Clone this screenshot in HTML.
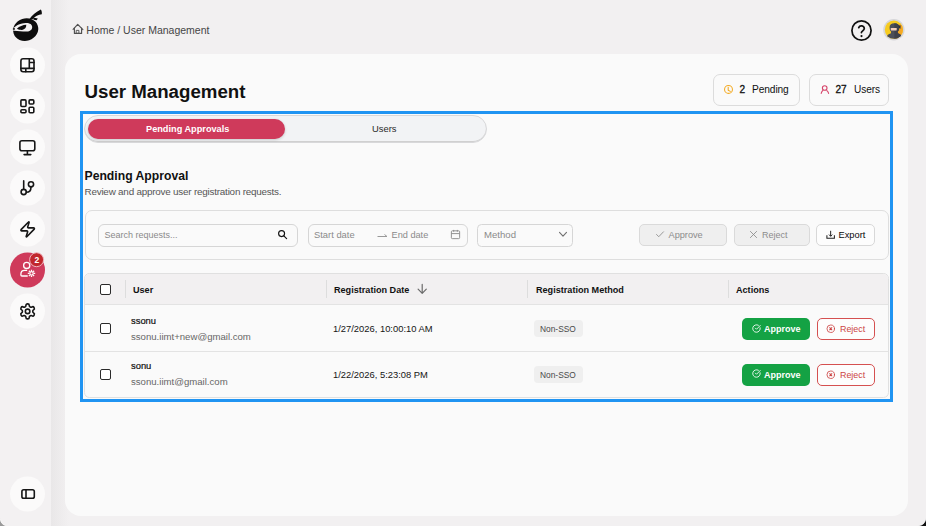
<!DOCTYPE html>
<html><head><meta charset="utf-8">
<style>
*{box-sizing:border-box;margin:0;padding:0}
html,body{width:926px;height:526px;overflow:hidden;background:#f2f0f1;font-family:"Liberation Sans",sans-serif;color:#151515}
.abs{position:absolute}
#side{position:absolute;left:0;top:0;width:51px;height:526px;background:#f3f1f2}
#shadow{position:absolute;left:51px;top:0;width:18px;height:526px;background:linear-gradient(to right,#e9e7e8,#f2f0f1)}
.sb{position:absolute;left:10px;width:35px;height:35px;border-radius:50%;background:#fbfafa}
.sb svg{position:absolute;left:9px;top:9px;width:17px;height:17px;fill:none;stroke:#1a1a1a;stroke-width:2;stroke-linecap:round;stroke-linejoin:round}
#card{position:absolute;left:65px;top:54px;width:843px;height:462px;background:#fafafa;border-radius:16px}
.t{position:absolute;white-space:nowrap;line-height:1}
.badge{position:absolute;top:74px;height:32px;border:1px solid #dcdcdc;border-radius:7px;background:#fafafa}
#outline{position:absolute;left:80px;top:111px;width:813px;height:291px;border:3px solid #2094f2}
.inp{border:1px solid #d6d6d6;border-radius:6px;background:#fafafa}
.dis{border:1px solid #dadada;border-radius:5px;background:#efefef}
.vsep{top:280px;width:1px;height:18px;background:#dddddd}
.cb{width:11px;height:11px;border:1.6px solid #2a2a2a;border-radius:2px;background:#fff}
.th{top:286px;font-size:9.1px;font-weight:700;color:#111}
.chip{left:534px;width:49px;height:17px;border-radius:4px;background:#efefef}
.ap{left:742px;width:68px;height:22px;border-radius:5px;background:#14a244}
.rj{left:817px;width:58px;height:22px;border-radius:5px;border:1px solid #d55050;background:#fdfdfd}
</style></head><body>
<div id="side"></div>
<div id="shadow"></div>

<!-- sidebar -->
<svg class="abs" style="left:0;top:0" width="51" height="526" viewBox="0 0 51 526">
 <g fill="#fbfafa">
  <circle cx="27.5" cy="65" r="17.5"/><circle cx="27.5" cy="106" r="17.5"/><circle cx="27.5" cy="147" r="17.5"/>
  <circle cx="27.5" cy="188" r="17.5"/><circle cx="27.5" cy="229" r="17.5"/><circle cx="27.5" cy="311" r="17.5"/>
  <circle cx="27.5" cy="494" r="17.5"/>
 </g>
 <circle cx="27.5" cy="270" r="17.5" fill="#cf3a5b"/>
 <!-- logo -->
 <g fill="#0d0d0d">
  <ellipse cx="25.7" cy="29.6" rx="12.7" ry="11.2" transform="rotate(-18 25.7 29.6)"/>
  <path d="M29.5 19 C32 15.5 36 12 40.8 9.6 C41.8 11 42 12.8 41.8 14.2 C38.5 14.5 35 16 32.5 19.3 Z"/>
  <path d="M33 17.6 L37.8 18.4 L36.6 20.2 L33.6 19.8 Z"/>
 </g>
 <path d="M13.4 28.4 C16 25.4 21 23.3 25.5 23.1 C29.8 22.9 32.2 24.6 32.2 27.1 C32.2 29.9 29.8 31.6 27 31.6 C22 31.7 17.5 30.5 13.2 30.7 Z" fill="#f3f1f2"/>
 <path d="M16.9 28.7 C19.2 26.4 23 24.9 26.3 24.8 C26.4 27.8 24.8 29.6 22 29.9 C20.2 30 18.4 29.5 16.9 28.7 Z" fill="#0d0d0d"/>
 <rect x="12.9" y="28.2" width="2" height="1.5" fill="#0d0d0d"/>
 <g fill="none" stroke="#161616" stroke-width="1.6" stroke-linecap="round" stroke-linejoin="round">
  <!-- layout -->
  <rect x="20.9" y="58.7" width="13.1" height="13.1" rx="2.2"/>
  <path d="M20.9 68.4H34M29.3 58.7V68.4M29.3 62.5H34M25.8 68.4V71.8"/>
  <!-- grid -->
  <rect x="20.9" y="99.9" width="5.1" height="6.6" rx="1"/>
  <rect x="29.1" y="99.9" width="4.7" height="4.1" rx="1"/>
  <rect x="20.9" y="109.8" width="5.1" height="3" rx="1"/>
  <rect x="29.1" y="107.3" width="4.7" height="5.5" rx="1"/>
  <!-- monitor -->
  <rect x="19.9" y="140.7" width="14.9" height="10.1" rx="2"/>
  <path d="M27.4 150.8V154.6M24.1 154.6H30.8"/>
  <!-- git -->
  <path d="M23.7 180.9V189.3"/>
  <circle cx="23.7" cy="192" r="2.6"/>
  <circle cx="31" cy="184.3" r="2.6"/>
  <path d="M31 186.9 C31 190.5 29 192.3 26.3 192.3"/>
  <!-- panel -->
  <rect x="21.9" y="489.8" width="12.4" height="8.4" rx="1.8"/>
  <path d="M26 489.8V498.2"/>
 </g>
 <g fill="none" stroke="#161616" stroke-width="2.13" stroke-linecap="round" stroke-linejoin="round">
  <path transform="translate(18.65 220.4) scale(0.75)" d="M4 14a1 1 0 0 1-.78-1.63l9.9-10.2a.5.5 0 0 1 .86.46l-1.92 6.02A1 1 0 0 0 13 10h7a1 1 0 0 1 .78 1.63l-9.9 10.2a.5.5 0 0 1-.86-.46l1.92-6.02A1 1 0 0 0 11 14z"/>
  <g transform="translate(18.6 302.4) scale(0.75)">
   <path d="M12.22 2h-.44a2 2 0 0 0-2 2v.18a2 2 0 0 1-1 1.73l-.43.25a2 2 0 0 1-2 0l-.15-.08a2 2 0 0 0-2.73.73l-.22.38a2 2 0 0 0 .73 2.730l.15.1a2 2 0 0 1 1 1.72v.51a2 2 0 0 1-1 1.74l-.15.09a2 2 0 0 0-.73 2.73l.22.38a2 2 0 0 0 2.73.73l.15-.08a2 2 0 0 1 2 0l.43.25a2 2 0 0 1 1 1.73V20a2 2 0 0 0 2 2h.44a2 2 0 0 0 2-2v-.18a2 2 0 0 1 1-1.730l.43-.25a2 2 0 0 1 2 0l.15.08a2 2 0 0 0 2.73-.73l.22-.39a2 2 0 0 0-.73-2.73l-.15-.08a2 2 0 0 1-1-1.74v-.5a2 2 0 0 1 1-1.74l.15-.09a2 2 0 0 0 .73-2.73l-.22-.38a2 2 0 0 0-2.73-.73l-.15.08a2 2 0 0 1-2 0l-.43-.25a2 2 0 0 1-1-1.73V4a2 2 0 0 0-2-2z"/>
   <circle cx="12" cy="12" r="3"/>
  </g>
 </g>
 <!-- user-cog -->
 <g fill="none" stroke="#fff" stroke-width="1.3" stroke-linecap="round" stroke-linejoin="round">
  <circle cx="26.7" cy="265.4" r="3.1"/>
  <path d="M26.6 270.4 H24.6 C22.3 270.4 20.9 272 20.9 274.2 V275 C20.9 275.6 21.3 276 21.9 276 H27.3"/>
  <circle cx="31.5" cy="273.4" r="1.7"/>
 </g>
 <path d="M33.90 273.40L35.20 273.40M33.20 275.10L34.12 276.02M31.50 275.80L31.50 277.10M29.80 275.10L28.88 276.02M29.10 273.40L27.80 273.40M29.80 271.70L28.88 270.78M31.50 271.00L31.50 269.70M33.20 271.70L34.12 270.78" stroke="#fff" stroke-width="1.25" stroke-linecap="butt"/>
 <circle cx="36.6" cy="259.7" r="7" fill="#c1272d" stroke="#f0b8c0" stroke-width="1"/>
 <text x="36.8" y="263.1" text-anchor="middle" font-family="Liberation Sans" font-weight="700" font-size="8.6" fill="#fff">2</text>
</svg>
<!-- breadcrumb -->
<svg class="abs" style="left:70px;top:20px" width="16" height="16" viewBox="70 20 16 16" fill="none" stroke="#505050" stroke-width="1.15" stroke-linejoin="round" stroke-linecap="round"><path d="M73.1 29.3 L77.7 24.3 L82.9 29.6"/><path d="M74.4 28 V33.4 H81.6 V28"/><rect x="76.6" y="30.4" width="2.3" height="3" stroke-width=".9"/></svg>
<div class="t" style="left:86.3px;top:25.2px;font-size:10.5px;color:#454545">Home / User Management</div>

<!-- help + avatar -->
<svg class="abs" style="left:850px;top:19px" width="23" height="23" viewBox="0 0 24 24" fill="none" stroke="#111" stroke-width="1.8" stroke-linecap="round"><circle cx="12" cy="12" r="10"/><path d="M9.1 9a3 3 0 0 1 5.8 1c0 2-3 2.6-3 4.2"/><circle cx="12" cy="17.8" r="1.15" fill="#111" stroke="none"/></svg>
<svg class="abs" style="left:880px;top:16px" width="28" height="28" viewBox="880 16 28 28">
  <defs><clipPath id="av"><circle cx="893.9" cy="29.7" r="9.1"/></clipPath></defs>
  <circle cx="893.9" cy="29.7" r="10.7" fill="#d6d6d9"/>
  <g clip-path="url(#av)">
   <rect x="880" y="16" width="28" height="28" fill="#f7cb1e"/>
   <rect x="894" y="24.5" width="14" height="20" fill="#f6a821"/>
   <path d="M885.8 41 C886 36 887.8 34 891 33.2 L891 31.5 C889.8 30.5 889.6 29 889.6 27 C889.6 24.6 891.4 23.2 894.4 23.2 C897.4 23.2 899.3 24.6 899.3 27 C899.3 29 899 30.5 897.8 31.5 L897.8 33.2 C900.8 34 902.6 36 902.8 41 Z" fill="#4b4f58"/>
   <path d="M894.4 23.2 C897.4 23.2 899.3 24.6 899.3 27 C899.3 29 899 30.5 897.8 31.5 L897.8 33.2 C900.8 34 902.6 36 902.8 41 L894.4 41 Z" fill="#3e4149"/>
   <rect x="890.8" y="28" width="5.9" height="2.5" rx=".4" fill="#f4cdb8"/>
   <path d="M898.6 25.2 L901.2 25.8 L900.2 27 L901.3 28.4 L898.8 28 Z" fill="#2f3238"/>
  </g>
 </svg>

<div id="card"></div>

<div class="t" style="left:84.5px;top:83px;font-size:18.7px;font-weight:700;color:#111">User Management</div>

<div class="badge" style="left:713px;width:87px"></div>
<svg class="abs" style="left:721px;top:82px" width="15" height="15" viewBox="721 82 15 15" fill="none" stroke="#f3aa22" stroke-width="1.05" stroke-linecap="round" stroke-linejoin="round"><circle cx="728.5" cy="89.4" r="3.95"/><path d="M728.2 87.2V90.2L730.3 91.4"/></svg>
<div class="t" style="left:739.5px;top:85px;font-size:10.1px;font-weight:400;-webkit-text-stroke:.3px #111;color:#111">2</div>
<div class="t" style="left:752px;top:84.5px;font-size:10.2px;letter-spacing:-.1px;color:#111">Pending</div>

<div class="badge" style="left:809px;width:80px"></div>
<svg class="abs" style="left:817px;top:82px" width="15" height="15" viewBox="817 82 15 15" fill="none" stroke="#d6456a" stroke-width="1.1" stroke-linecap="round"><circle cx="824.7" cy="88" r="2.3"/><path d="M822.6 90.6C821.9 91.4 821.4 92.3 821.2 93.4M826.9 90.6C827.7 91.3 828.3 92.3 828.6 93.4"/></svg>
<div class="t" style="left:835.5px;top:85px;font-size:10.1px;font-weight:400;-webkit-text-stroke:.3px #111;color:#111">27</div>
<div class="t" style="left:854px;top:84.5px;font-size:10.1px;letter-spacing:-.1px;color:#111">Users</div>


<!-- tabs -->
<div class="abs" style="left:84px;top:115px;width:403px;height:28px;border-radius:14px;background:#f2f3f5;border:1px solid #d8d8da;box-shadow:inset 0 -1px 0 #d0d0d0"></div>
<div class="abs" style="left:88px;top:119px;width:197px;height:20px;border-radius:10px;background:#cf3a5b;box-shadow:0 1px 3px rgba(0,0,0,.18)"></div>
<div class="t" style="left:146px;top:125px;font-size:9.2px;font-weight:700;color:#fff">Pending Approvals</div>
<div class="t" style="left:372px;top:123.5px;font-size:9.4px;font-weight:400;color:#2a2a2a">Users</div>

<div class="t" style="left:84.5px;top:170px;font-size:12.2px;font-weight:700;color:#111">Pending Approval</div>
<div class="t" style="left:84.5px;top:186.5px;font-size:9.9px;letter-spacing:-.22px;color:#555">Review and approve user registration requests.</div>

<!-- filter card -->
<div class="abs" style="left:85px;top:210px;width:804px;height:50px;border:1px solid #dedede;border-radius:7px;background:#fafafa"></div>
<div class="abs inp" style="left:98px;top:224px;width:200px;height:23px"></div>
<div class="t" style="left:104.5px;top:231px;font-size:9px;color:#8a8a8a">Search requests...</div>
<svg class="abs" style="left:277px;top:229px" width="11" height="11" viewBox="0 0 24 24" fill="none" stroke="#111" stroke-width="2.5" stroke-linecap="round"><circle cx="10" cy="10" r="6.5"/><path d="M15 15l6 6"/></svg>

<div class="abs inp" style="left:308px;top:224px;width:160px;height:23px"></div>
<div class="t" style="left:314px;top:230px;font-size:9.4px;color:#8a8a8a">Start date</div>
<svg class="abs" style="left:377px;top:231px" width="11" height="8" viewBox="0 0 11 8" fill="none" stroke="#999" stroke-width="1"><path d="M0.5 5.5h9.5M7.5 3.5l2.5 2"/></svg>
<div class="t" style="left:391.5px;top:231px;font-size:9.2px;color:#8a8a8a">End date</div>
<svg class="abs" style="left:450px;top:229px" width="11" height="11" viewBox="0 0 24 24" fill="none" stroke="#8a8a8a" stroke-width="2"><rect x="3" y="4" width="18" height="17" rx="2"/><path d="M3 10h18M8 2v4M16 2v4"/></svg>

<div class="abs inp" style="left:477px;top:224px;width:96px;height:23px;border-radius:4.5px"></div>
<div class="t" style="left:484px;top:230px;font-size:9.6px;color:#8a8a8a">Method</div>
<svg class="abs" style="left:556px;top:228px" width="14" height="12" viewBox="556 228 14 12" fill="none" stroke="#707070" stroke-width="1.1" stroke-linecap="round" stroke-linejoin="round"><path d="M559.5 232.3L563 236.2L566.5 232.3"/></svg>

<div class="abs dis" style="left:639px;top:224px;width:88px;height:22px"></div>
<svg class="abs" style="left:655px;top:229px" width="10" height="10" viewBox="0 0 24 24" fill="none" stroke="#888" stroke-width="2"><path d="M3 12.5l6 6L21 6"/></svg>
<div class="t" style="left:668.5px;top:231px;font-size:9.2px;color:#8c8c8c">Approve</div>
<div class="abs dis" style="left:734px;top:224px;width:76px;height:22px"></div>
<svg class="abs" style="left:749px;top:229.5px" width="9" height="9" viewBox="0 0 24 24" fill="none" stroke="#888" stroke-width="2.2"><path d="M3 3l18 18M21 3L3 21"/></svg>
<div class="t" style="left:762px;top:231px;font-size:9px;color:#8c8c8c">Reject</div>
<div class="abs" style="left:816px;top:224px;width:59px;height:22px;border:1px solid #d8d8d8;border-radius:5px;background:#fdfdfd"></div>
<svg class="abs" style="left:824px;top:228px" width="13" height="13" viewBox="824 228 13 13" fill="none" stroke="#222" stroke-width="1.05" stroke-linejoin="miter"><path d="M826.9 235.3V238.3H834.4V235.3"/><path d="M830.65 230.8V236.2M829 234.6L830.65 236.3L832.3 234.6" stroke-width="1"/></svg>
<div class="t" style="left:838.5px;top:231px;font-size:9.3px;color:#0a0a0a">Export</div>

<!-- table -->
<div class="abs" style="left:84px;top:273px;width:805px;height:125px;border:1px solid #e0e0e0;border-radius:5.5px;background:#fafafa;overflow:hidden">
  <div class="abs" style="left:0;top:0;width:805px;height:31px;background:#f2f0f1;border-bottom:1px solid #e3e3e3"></div>
  <div class="abs" style="left:0;top:77px;width:805px;height:1px;background:#e3e3e3"></div>
</div>
<div class="abs vsep" style="left:125px"></div>
<div class="abs vsep" style="left:326px"></div>
<div class="abs vsep" style="left:527px"></div>
<div class="abs vsep" style="left:728px"></div>
<div class="abs cb" style="left:100px;top:284px"></div>
<div class="abs cb" style="left:100px;top:323px"></div>
<div class="abs cb" style="left:100px;top:369px"></div>
<div class="t th" style="left:133px">User</div>
<div class="t th" style="left:334px">Registration Date</div>
<svg class="abs" style="left:414px;top:282px" width="16" height="14" viewBox="414 282 16 14" fill="none" stroke="#6a6a6a" stroke-width="1.2" stroke-linecap="round" stroke-linejoin="round"><path d="M422.2 284.4V293.3M418.1 289.2L422.2 293.3L426.3 289.2"/></svg>
<div class="t th" style="left:536px">Registration Method</div>
<div class="t th" style="left:736px">Actions</div>

<div class="t" style="left:131px;top:316px;font-size:9.4px;color:#111;-webkit-text-stroke:.2px #111">ssonu</div>
<div class="t" style="left:131px;top:332px;font-size:9.6px;color:#666">ssonu.iimt+new@gmail.com</div>
<div class="t" style="left:333px;top:324px;font-size:9.4px;color:#151515">1/27/2026, 10:00:10 AM</div>
<div class="abs chip" style="top:320px"></div>
<div class="t" style="left:540px;top:325px;font-size:8.4px;color:#4a4a4a">Non-SSO</div>

<div class="t" style="left:131px;top:361px;font-size:9.4px;color:#111;-webkit-text-stroke:.2px #111">sonu</div>
<div class="t" style="left:131px;top:377px;font-size:9.6px;color:#666">ssonu.iimt@gmail.com</div>
<div class="t" style="left:333px;top:370px;font-size:9.4px;color:#151515">1/22/2026, 5:23:08 PM</div>
<div class="abs chip" style="top:366px"></div>
<div class="t" style="left:540px;top:371px;font-size:8.4px;color:#4a4a4a">Non-SSO</div>

<div class="abs ap" style="top:318px"></div>
<div class="abs rj" style="top:318px"></div>
<div class="abs ap" style="top:363.5px;height:22.5px"></div>
<div class="abs rj" style="top:363.5px;height:22.5px"></div>

<svg class="abs" style="left:751.8px;top:323.6px" width="9" height="9" viewBox="0 0 24 24" fill="none" stroke="#fff" stroke-width="2.3" stroke-linecap="round"><path d="M21.8 10A10 10 0 1 1 17 3.3"/><path d="M9 11l3 3L22 4"/></svg>
<div class="t" style="left:764px;top:325px;font-size:9px;font-weight:700;color:#fff">Approve</div>
<svg class="abs" style="left:826px;top:324.2px" width="9.5" height="9.5" viewBox="0 0 24 24" fill="none" stroke="#cc4444" stroke-width="2.1" stroke-linecap="round"><circle cx="12" cy="12" r="9.5"/><path d="M14.6 9.4l-5.2 5.2M9.4 9.4l5.2 5.2" stroke-width="2.8"/></svg>
<div class="t" style="left:840px;top:325px;font-size:8.9px;color:#cc4444">Reject</div>

<svg class="abs" style="left:751.8px;top:369.4px" width="9" height="9" viewBox="0 0 24 24" fill="none" stroke="#fff" stroke-width="2.3" stroke-linecap="round"><path d="M21.8 10A10 10 0 1 1 17 3.3"/><path d="M9 11l3 3L22 4"/></svg>
<div class="t" style="left:764px;top:371px;font-size:9px;font-weight:700;color:#fff">Approve</div>
<svg class="abs" style="left:826px;top:370px" width="9.5" height="9.5" viewBox="0 0 24 24" fill="none" stroke="#cc4444" stroke-width="2.1" stroke-linecap="round"><circle cx="12" cy="12" r="9.5"/><path d="M14.6 9.4l-5.2 5.2M9.4 9.4l5.2 5.2" stroke-width="2.8"/></svg>
<div class="t" style="left:840px;top:371px;font-size:8.9px;color:#cc4444">Reject</div>

<div id="outline"></div>


<svg class="abs" style="left:0;top:516px" width="10" height="10" viewBox="0 516 10 10"><path d="M0 518.6 A8 8 0 0 0 6 526 L0 526 Z" fill="#9a9a9a"/><path d="M0.4 518.9 A7.6 7.6 0 0 0 5.8 525.6" fill="none" stroke="#fff" stroke-width=".8" opacity=".7"/></svg>
<svg class="abs" style="left:916px;top:516px" width="10" height="10" viewBox="916 516 10 10"><path d="M926 518.8 A8 8 0 0 1 918.6 526 L926 526 Z" fill="#111"/><path d="M925.6 519 A7.6 7.6 0 0 1 918.8 525.6" fill="none" stroke="#fff" stroke-width=".8" opacity=".8"/></svg>
</body></html>
